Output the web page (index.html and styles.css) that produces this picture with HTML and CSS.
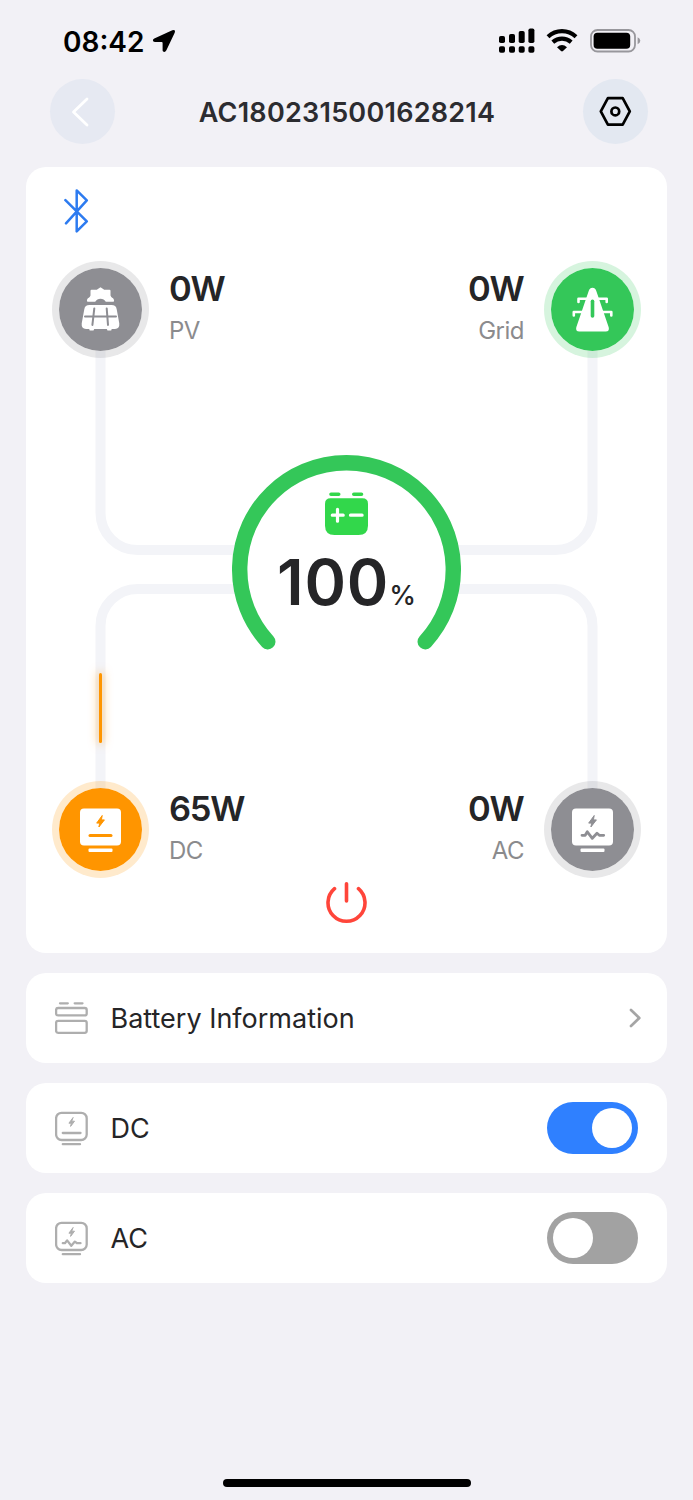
FILE: index.html
```html
<!DOCTYPE html>
<html lang="en">
<head>
    <meta charset="UTF-8">
    <meta name="viewport" content="width=device-width, initial-scale=1.0">
    <title>AC1802315001628214</title>
    <link rel="stylesheet" href="styles.css">
</head>
<body>
    <div class="screen">
        <!-- Status bar -->
        <div class="status-bar">
            <div class="status-left">
                <span class="time">08:42</span>
                <svg width="24" height="24" viewBox="0 0 24 24"><path d="M2.3 9.6 20.3 1.3Q23.9.2 22.7 3.8L14.4 21.2Q12.8 24 10.9 22.2Q10.6 21.8 10.6 21V14Q10.6 13.1 9.7 13.1H3Q.8 12.9.9 11.3Q1 10.2 2.3 9.6Z"/></svg>
            </div>
            <div class="status-right">
                <svg width="36" height="26" viewBox="0 0 36 26">
                    <rect x="0" y="8" width="6" height="7" rx="1.8"/>
                    <rect x="10" y="6" width="6" height="9" rx="1.8"/>
                    <rect x="19.7" y="3" width="6" height="12" rx="1.8"/>
                    <rect x="29.4" y="0.5" width="6" height="14.5" rx="1.8"/>
                    <rect x="0" y="18.3" width="6" height="6.5" rx="1.8"/>
                    <rect x="10" y="18.3" width="6" height="6.5" rx="1.8"/>
                    <rect x="19.7" y="18.3" width="6" height="6.5" rx="1.8"/>
                    <rect x="29.4" y="18.3" width="6" height="6.5" rx="1.8"/>
                </svg>
                <svg class="wifi" width="32" height="24" viewBox="0 0 32 24">
                    <path d="M2 7.7Q8 2.2 16 2.2T30 7.7" fill="none" stroke="#000" stroke-width="4.2"/>
                    <path d="M6.8 13.2Q10.8 9.7 16 9.7T25.2 13.2" fill="none" stroke="#000" stroke-width="4.2"/>
                    <path d="M11 18.2Q16 14 21 18.2L17 22.1Q16 22.9 15 22.1Z"/>
                </svg>
                <svg class="battery" width="51" height="24" viewBox="0 0 51 24">
                    <rect x="1" y="1" width="44" height="21.5" rx="6.5" fill="none" stroke="#98979c" stroke-width="1.8"/>
                    <rect x="3.6" y="3.8" width="36.6" height="16" rx="3.8"/>
                    <path d="M47.6 8.3Q50.3 9.6 50.3 11.8T47.6 15.3Z" fill="#98979c"/>
                </svg>
            </div>
        </div>

        <!-- Header -->
        <div class="header">
            <div class="round-btn back">
                <svg width="18" height="30" viewBox="0 0 18 30"><path d="M16 2 2.5 15 16 28" fill="none" stroke="#fff" stroke-width="2.8" stroke-linecap="round" stroke-linejoin="round"/></svg>
            </div>
            <h1 class="title">AC1802315001628214</h1>
            <div class="round-btn settings">
                <svg width="33" height="31" viewBox="0 0 33 31" fill="none" stroke="#000">
                    <path d="M8.9 2.2H23.7L30.8 15.4 23.7 28.6H8.9L1.8 15.4Z" stroke-width="2.7" stroke-linejoin="round"/>
                    <circle cx="16.3" cy="15.4" r="3.9" stroke-width="2.7"/>
                </svg>
            </div>
        </div>

        <!-- Energy flow -->
        <div class="card flow-card">
            <svg class="wires" width="641" height="786" viewBox="0 0 641 786" fill="none">
                <path d="M74.5 180V346A37 37 0 0 0 111.5 383H529.5A37 37 0 0 0 566.5 346V180" stroke="#f3f4f8" stroke-width="10"/>
                <path d="M74.5 625V459A37 37 0 0 1 111.5 422H529.5A37 37 0 0 1 566.5 459V625" stroke="#f3f4f8" stroke-width="10"/>
            </svg>
            <div class="current"></div>

            <svg class="bluetooth" width="26" height="44" viewBox="0 0 26 44" fill="none"><path d="M1.4 11.2 22.8 32.3 12.7 42.4V1.4L22.8 11.3 2 34.3" stroke="#2d7bf0" stroke-width="2.5" stroke-linecap="round" stroke-linejoin="round"/></svg>

            <div class="node-row">
                <div class="node">
                    <div class="node-icon gray">
                        <svg width="47" height="47" viewBox="0.5 0.5 47 47">
                            <path d="M10.4 15.2C10.6 12.6 12 12.4 13.2 11.4L14 9.9V5.2Q14 4.3 15 4.3H19.6Q20.4 4.3 21 3.8L24 1.8 27 3.8Q27.6 4.3 28.4 4.3H33Q34 4.3 34 5.2V9.9L34.8 11.4C36 12.4 37.4 12.6 37.6 15.2Q37.6 16.2 36.6 16.2H29.3Q27.5 13.2 24 13.2T18.7 16.2H11.4Q10.4 16.2 10.4 15.2Z" fill="#fff"/>
                            <path d="M13 19.6H35Q39.5 19.6 40.2 23.8L42.8 38Q43.3 43.2 38.5 43.5H35.2L34.7 45H31L30.3 43.5H17.7L17 45H13.2L12.7 43.5H9.5Q4.7 43.2 5.2 38L7.8 23.8Q8.5 19.6 13 19.6Z" fill="#fff"/>
                            <path d="M8.5 31H39.5M17.8 22.9 15.9 39.4M30.2 22.9 31.5 39.4" stroke="#8e8e93" stroke-width="2" stroke-linecap="round"/>
                        </svg>
                    </div>
                    <div class="node-text">
                        <div class="power">0W</div>
                        <div class="label">PV</div>
                    </div>
                </div>
                <div class="node right">
                    <div class="node-text">
                        <div class="power">0W</div>
                        <div class="label">Grid</div>
                    </div>
                    <div class="node-icon green">
                        <svg width="47" height="47" viewBox="0.5 0 47 47">
                            <path d="M20.2 5.1Q21.3 1.8 24 1.8T27.8 5.1L40.2 41.3Q41.2 45.4 37.2 45.6H10.8Q6.8 45.4 7.8 41.3Z" fill="#fff"/>
                            <path d="M10 16V12.7H38.2V16M5.3 29.5V26H42.8V29.5" fill="none" stroke="#fff" stroke-width="2.6" stroke-linecap="round" stroke-linejoin="round"/>
                            <path d="M24 15.2V30" stroke="#34c759" stroke-width="3.6" stroke-linecap="round"/>
                        </svg>
                    </div>
                </div>
            </div>

            <div class="gauge">
                <svg class="gauge-ring" width="229" height="230" viewBox="0.5 0.5 229 230">
                    <circle cx="115" cy="115" r="107" fill="#fff"/>
                    <path d="M36.3 187.2A106.8 106.8 0 1 1 193.7 187.2" fill="none" stroke="#34c759" stroke-width="15.4" stroke-linecap="round"/>
                </svg>
                <svg class="gauge-icon" width="43" height="44" viewBox="0.5 0 43 44">
                    <path d="M6.5 2.3H14.2M29.3 2.3H37" stroke="#32d74b" stroke-width="3.6" stroke-linecap="round"/>
                    <path d="M6 6.2H38Q43.5 6.2 43.5 11.7V33.5Q43.5 43 34 43H10Q.5 43 .5 33.5V11.7Q.5 6.2 6 6.2Z" fill="#32d74b"/>
                    <path d="M7.8 23.2H18.7M13 17.3V29.2M26 23.2H37.6" stroke="#fff" stroke-width="3.2" stroke-linecap="round"/>
                </svg>
                <div class="gauge-value"><span class="number">100</span><span class="percent">%</span></div>
            </div>

            <div class="node-row">
                <div class="node">
                    <div class="node-icon orange">
                        <svg width="47" height="47" viewBox="0.5 0.5 47 47">
                            <rect x="3.5" y="3" width="41" height="37" rx="4" fill="#fff"/>
                            <path d="M25.7 10 20.2 17.6H23.2L22.4 21.5 27.9 14.4H24.9Z" fill="#ff9500" stroke="#ff9500" stroke-linejoin="round"/>
                            <path d="M13.5 30H34.5" stroke="#ff9500" stroke-width="3" stroke-linecap="round"/>
                            <rect x="12" y="43" width="24" height="3.4" rx="1" fill="#fff"/>
                        </svg>
                    </div>
                    <div class="node-text">
                        <div class="power">65W</div>
                        <div class="label">DC</div>
                    </div>
                </div>
                <div class="node right">
                    <div class="node-text">
                        <div class="power">0W</div>
                        <div class="label">AC</div>
                    </div>
                    <div class="node-icon gray">
                        <svg width="47" height="47" viewBox="0.5 0.5 47 47">
                            <rect x="3.5" y="3" width="41" height="37" rx="4" fill="#fff"/>
                            <path d="M25.7 10 20.2 17.6H23.2L22.4 21.5 27.9 14.4H24.9Z" fill="#8e8e93" stroke="#8e8e93" stroke-linejoin="round"/>
                            <path d="M13.5 29.8H16.7L18.8 26.3 23.8 32.8 28.5 27.8 30.8 29.8H35.2" fill="none" stroke="#8e8e93" stroke-width="2.8" stroke-linecap="round" stroke-linejoin="round"/>
                            <rect x="12" y="43" width="24" height="3.4" rx="1" fill="#fff"/>
                        </svg>
                    </div>
                </div>
            </div>

            <svg class="power-btn" width="41" height="43" viewBox="0.5 -0.5 41 43" fill="none" stroke="#ff453a" stroke-width="3.6" stroke-linecap="round"><path d="M9 7.2A18.5 18.5 0 1 0 33 7.2M21 2.3V19.5"/></svg>
        </div>

        <!-- Settings rows -->
        <div class="card row">
            <svg class="row-icon" width="34" height="36" viewBox="0.5 0 34 36" fill="none" stroke="#aeaeae" stroke-width="2.3">
                <path d="M5.5 3.3H13.3M20.2 3.3H28" stroke-linecap="round"/>
                <rect x="1.6" y="8" width="30.6" height="7.4" rx="2"/>
                <rect x="1.6" y="20.8" width="30.6" height="12" rx="2"/>
            </svg>
            <span class="row-label">Battery Information</span>
            <svg class="chevron" width="12" height="20" viewBox="0 0 12 20" fill="none"><path d="M2 2 10.3 10 2 18" stroke="#a5a5a5" stroke-width="2.7" stroke-linecap="round" stroke-linejoin="round"/></svg>
        </div>

        <div class="card row">
            <svg class="row-icon" width="34" height="36" viewBox="0.5 0 34 36" fill="none" stroke="#aeaeae" stroke-width="2.3" stroke-linecap="round">
                <rect x="1.6" y="2.8" width="30.6" height="27.2" rx="5.5"/>
                <path d="M8.3 23H26M8.3 34.2H25.5"/>
                <path d="M18.4 7.8 14.4 13.2H16.8L16.1 16.4 20 11.2H17.5Z" fill="#aeaeae" stroke-width="1"/>
            </svg>
            <span class="row-label">DC</span>
            <div class="toggle on"><div class="knob"></div></div>
        </div>

        <div class="card row">
            <svg class="row-icon" width="34" height="36" viewBox="0.5 0 34 36" fill="none" stroke="#aeaeae" stroke-width="2.3" stroke-linecap="round">
                <rect x="1.6" y="2.8" width="30.6" height="27.2" rx="5.5"/>
                <path d="M8.3 23.2H10.4L12.6 20.4 16.8 25.8 20.4 21.6 22.6 23.2H26" stroke-linejoin="round"/>
                <path d="M8.3 34.2H25.5"/>
                <path d="M18.4 7.8 14.4 13.2H16.8L16.1 16.4 20 11.2H17.5Z" fill="#aeaeae" stroke-width="1"/>
            </svg>
            <span class="row-label">AC</span>
            <div class="toggle"><div class="knob"></div></div>
        </div>

        <div class="home-indicator"></div>
    </div>
</body>
</html>
```
FILE: styles.css
```css
* {
    box-sizing: border-box;
}

body {
    margin: 0;
    background-color: #f2f1f6;
    font-family: Inter, "Liberation Sans", sans-serif;
    color: #252527;
}

svg {
    display: block;
    flex: none;
}

.screen {
    width: 693px;
    height: 1500px;
    padding: 0 26px 13px;
    display: flex;
    flex-direction: column;
}

/* Status bar */
.status-bar {
    height: 79px;
    padding: 28px 26px 0 37px;
    display: flex;
    justify-content: space-between;
    align-items: flex-start;
    color: #000;
}

.status-left,
.status-right {
    display: flex;
    align-items: center;
    height: 26px;
}

.status-left {
    gap: 8px;
}

.time {
    padding-top: 2px;
    font-size: 28px;
    font-weight: 600;
}

.wifi {
    margin-left: 11px;
}

.battery {
    margin-left: 12px;
}

/* Header */
.header {
    height: 88px;
    padding: 0 19px 0 24px;
    display: flex;
    justify-content: space-between;
    align-items: flex-start;
}

.round-btn {
    width: 65px;
    height: 65px;
    border-radius: 50%;
    background-color: #e6e9f2;
    display: flex;
    align-items: center;
    justify-content: center;
}

.round-btn.back {
    padding-right: 5px;
}

.round-btn.settings {
    background-color: #e3e8f1;
}

.title {
    margin: 0 4px 0 0;
    padding-top: 1px;
    font-size: 27px;
    font-weight: 600;
    line-height: 65px;
    letter-spacing: 0.25px;
    white-space: nowrap;
    color: #2c2c30;
}

.card {
    background-color: #fff;
    border-radius: 20px;
}

/* Energy flow */
.flow-card {
    position: relative;
    height: 786px;
    padding: 22px 26px 0;
    display: flex;
    flex-direction: column;
}

.wires {
    position: absolute;
    top: 0;
    left: 0;
}

.current {
    position: absolute;
    left: 73px;
    top: 506px;
    width: 3px;
    height: 70px;
    border-radius: 2px;
    background-color: #ff9500;
    box-shadow: 0 0 10px 1px rgba(255, 149, 0, 0.5);
}

.bluetooth {
    margin-left: 12px;
}

.node-row {
    position: relative;
    display: flex;
    justify-content: space-between;
    margin-top: 28px;
}

.node {
    display: flex;
    gap: 20px;
}

.node-icon {
    width: 97px;
    height: 97px;
    border-radius: 50%;
    border: 7px solid;
    background-clip: padding-box;
    display: flex;
    align-items: center;
    justify-content: center;
}

.node-icon.gray {
    background-color: #8e8e93;
    border-color: rgba(142, 142, 147, 0.2);
}

.node-icon.green {
    background-color: #34c759;
    border-color: rgba(52, 199, 89, 0.2);
}

.node-icon.orange {
    background-color: #ff9500;
    border-color: rgba(255, 149, 0, 0.2);
}

.node-text {
    padding-top: 8px;
}

.right .node-text {
    text-align: right;
}

.power {
    font-size: 34.5px;
    font-weight: 600;
    line-height: 40px;
    letter-spacing: -1.2px;
}

.right .power {
    margin-right: 0.5px;
}

.label {
    margin-top: 7px;
    font-size: 24px;
    line-height: 30px;
    letter-spacing: -0.5px;
    color: #8b8b8d;
}

/* Battery gauge */
.gauge {
    position: relative;
    width: 229px;
    height: 230px;
    margin: 97px auto 68px;
    padding-top: 37px;
}

.gauge + .node-row {
    margin-top: 28px;
}

.gauge-ring {
    position: absolute;
    top: 0;
    left: 0;
}

.gauge-icon {
    position: relative;
    margin: 0 auto;
}

.gauge-value {
    position: relative;
    margin-top: 9px;
    line-height: 74px;
    text-align: center;
    white-space: nowrap;
}

.number {
    font-size: 63px;
    font-weight: 600;
    letter-spacing: 0.8px;
}

.percent {
    font-size: 27px;
    font-weight: 500;
}

.power-btn {
    position: relative;
    margin: 3px auto 0;
}

/* Settings rows */
.row {
    height: 90px;
    margin-top: 20px;
    padding: 0 29px;
    display: flex;
    align-items: center;
}

.row-label {
    flex: 1;
    margin-left: 21.5px;
    font-size: 27px;
}

.chevron {
    margin-right: -3px;
}

.toggle {
    width: 91px;
    height: 52px;
    padding: 6px;
    border-radius: 26px;
    background-color: #a2a2a2;
    display: flex;
}

.toggle.on {
    background-color: #2f80ff;
    justify-content: flex-end;
}

.knob {
    width: 40px;
    height: 40px;
    border-radius: 50%;
    background-color: #fff;
}

.home-indicator {
    width: 248px;
    height: 8px;
    margin: auto auto 0;
    border-radius: 4px;
    background-color: #000;
}
```
